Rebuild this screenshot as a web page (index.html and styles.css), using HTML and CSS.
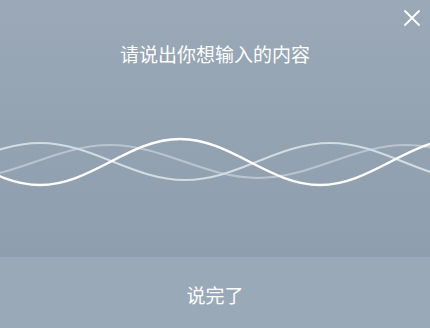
FILE: index.html
```html
<!DOCTYPE html>
<html lang="zh">
<head>
<meta charset="utf-8">
<link rel="stylesheet" href="styles.css">
</head>
<body>
<div class="panel">
  <div class="top">
    <button class="close" aria-label="关闭">
      <svg width="18" height="18" viewBox="0 0 18 18"><path d="M2 2 L16 16 M16 2 L2 16" stroke="#fff" stroke-width="1.8" stroke-linecap="round" fill="none"/></svg>
    </button>
    <div class="title">请说出你想输入的内容</div>
    <div class="wave">
      <svg width="430" height="110" viewBox="0 110 430 110">
        <path class="w3" d="M-38 178 C15.8 178 56.2 145 110 145 S204.2 178 258 178 S352.2 145 406 145 S500.2 178 554 178"/>
        <path class="w2" d="M-105 180 C-52.3 180 -12.7 143 40 143 S132.3 180 185 180 S277.3 143 330 143 S422.3 180 475 180"/>
        <path class="w1" d="M-100 139 C-49.1 139 -10.9 185 40 185 S129.1 139 180 139 S269.1 185 320 185 S409.1 139 460 139"/>
      </svg>
    </div>
  </div>
  <div class="bottom">说完了</div>
</div>
</body>
</html>
```
FILE: styles.css
```css
html, body {
  margin: 0;
  padding: 0;
}
body {
  width: 430px;
  height: 328px;
  overflow: hidden;
  font-family: "Noto Sans CJK SC", "Noto Sans", sans-serif;
}
.panel {
  display: flex;
  flex-direction: column;
  height: 328px;
}
.top {
  position: relative;
  height: 257px;
  background: linear-gradient(to bottom, #9aa8b7 0%, #93a2b1 60%, #8f9eae 100%);
  display: flex;
  flex-direction: column;
  align-items: center;
}
.close {
  position: absolute;
  top: 9px;
  right: 9px;
  width: 18px;
  height: 18px;
  padding: 0;
  border: 0;
  background: none;
  display: flex;
}
.title {
  margin-top: 40px;
  font-size: 19px;
  line-height: 28px;
  color: #fff;
  letter-spacing: 0;
}
.wave {
  margin-top: 42px;
  width: 430px;
  height: 110px;
  display: flex;
}
.wave path {
  fill: none;
  stroke-linecap: round;
}
.w1 {
  stroke: #ffffff;
  stroke-width: 2.4;
}
.w2 {
  stroke: #d3dbe3;
  stroke-width: 2;
}
.w3 {
  stroke: #b9c4cf;
  stroke-width: 2;
}
.bottom {
  flex: 1;
  background: #9aa9b8;
  color: #fff;
  font-size: 19px;
  display: flex;
  align-items: center;
  justify-content: center;
  padding-top: 4px;
}
```
